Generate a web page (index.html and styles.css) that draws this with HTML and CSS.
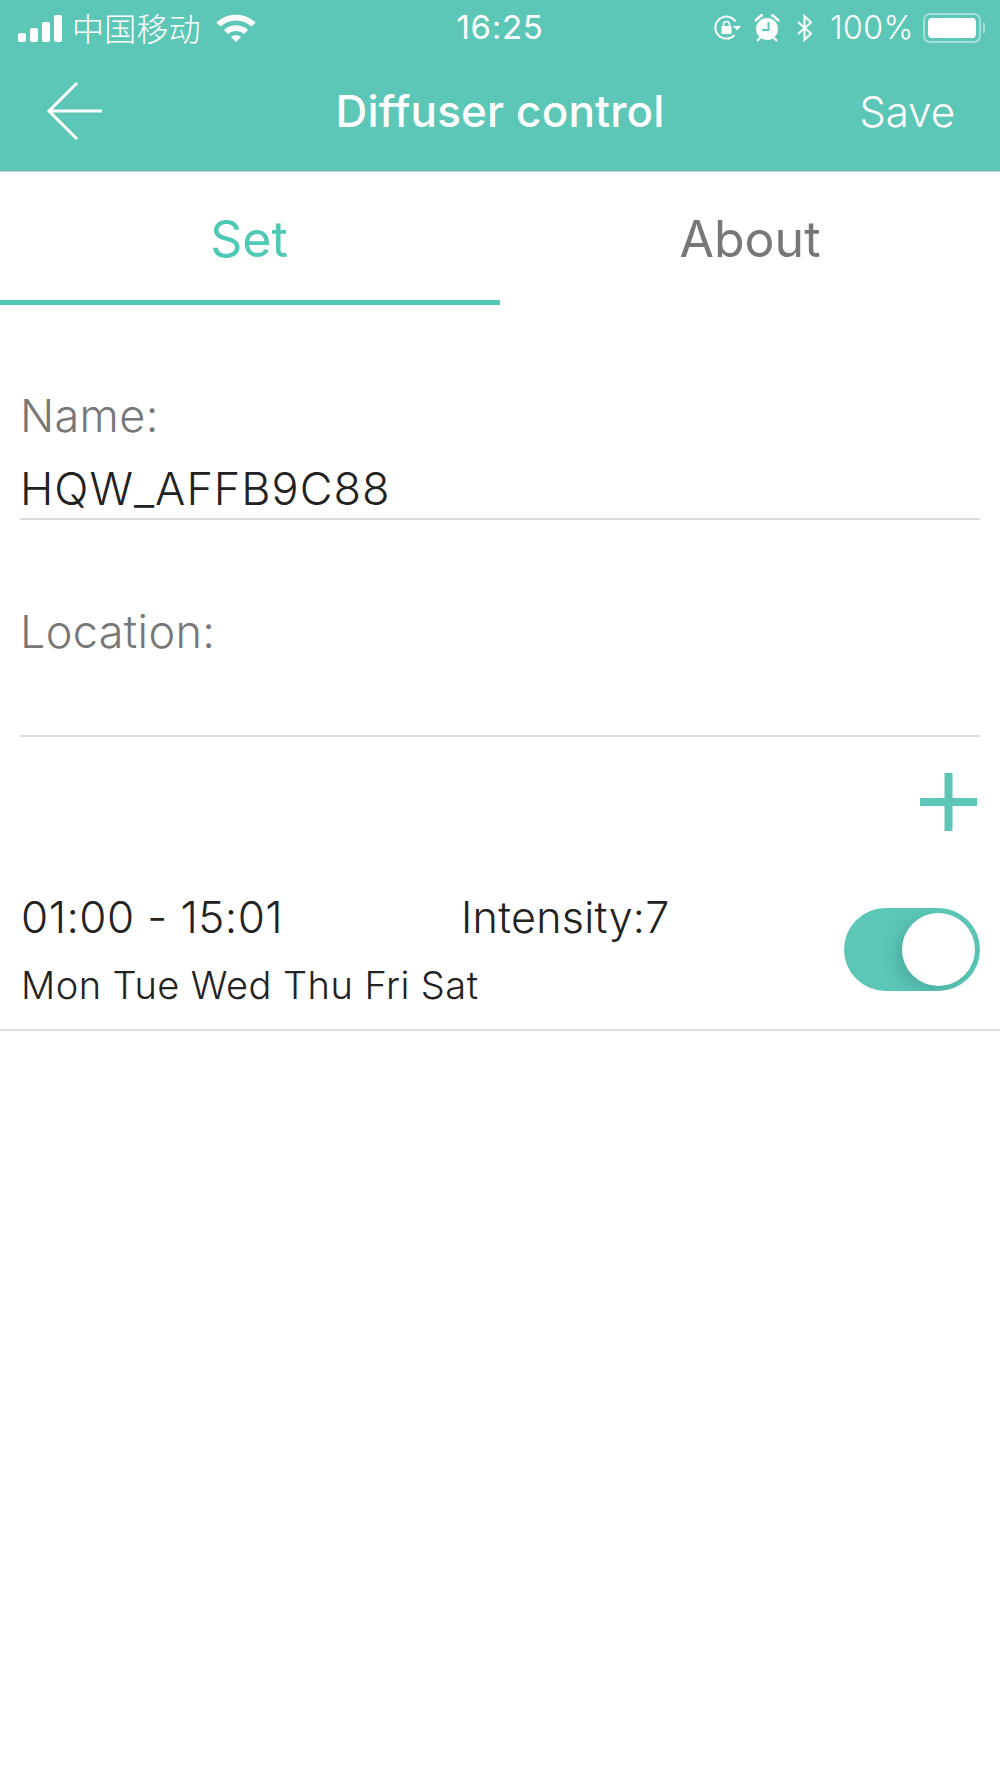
FILE: index.html
```html
<!DOCTYPE html>
<html lang="en">
<head>
<meta charset="utf-8">
<title>Diffuser control</title>
<link rel="stylesheet" href="styles.css">
</head>
<body>
<div class="app">
  <header class="top">
    <div class="status">
      <div class="status-left">
        <svg class="signal" width="46" height="30" viewBox="0 0 46 30"><g fill="#fff"><rect x="1" y="20" width="8" height="9" rx="2"/><rect x="13" y="15" width="8" height="14" rx="2"/><rect x="25" y="9" width="8" height="20" rx="2"/><rect x="37" y="2" width="8" height="27" rx="2"/></g></svg>
        <span class="carrier">中国移动</span>
        <svg class="wifi" width="40" height="30" viewBox="0 0 40 30"><g fill="#fff"><path d="M0.5 9.5C11 -1 29 -1 39.5 9.5L35.5 13.5C27 5.5 13 5.5 4.5 13.5Z"/><path d="M8 17C14.5 10.8 25.5 10.8 32 17L28 21C23.5 17 16.5 17 12 21Z"/><path d="M15 24C17.8 21.7 22.2 21.7 25 24L20 29Z"/></g></svg>
      </div>
      <div class="clock">16:25</div>
      <div class="status-right">
        <svg class="lock" width="28" height="28" viewBox="0 0 28 28"><path d="M21.5 21A11 11 0 1 1 22.5 7.5" fill="none" stroke="#fff" stroke-width="2"/><path d="M20 12L28 12L24 16.5Z" fill="#fff"/><rect x="8.5" y="12" width="10" height="8" rx="1" fill="#fff"/><path d="M10.5 12V10.5a3 3 0 0 1 6 0V12" fill="none" stroke="#fff" stroke-width="1.6"/></svg>
        <svg class="alarm" width="26" height="28" viewBox="0 0 26 28"><circle cx="13" cy="15" r="11" fill="#fff"/><path d="M14.5 8V16H8" fill="none" stroke="#5cc7b7" stroke-width="2"/><path d="M1 7L7 1.5H9M25 7L19 1.5H17" fill="none" stroke="#fff" stroke-width="2.6"/><path d="M3 27L6.5 23.5M23 27L19.5 23.5" stroke="#fff" stroke-width="2.2"/></svg>
        <svg class="bt" width="18" height="28" viewBox="0 0 18 28"><path d="M2 8L15 19.5L8.5 26V2L15 8.5L2 20" fill="none" stroke="#fff" stroke-width="2"/></svg>
        <span class="pct">100%</span>
        <div class="battery"><div class="battery-fill"></div></div>
        <div class="battery-cap"></div>
      </div>
    </div>
    <nav class="bar">
      <svg class="back" width="58" height="60" viewBox="0 0 58 60"><path d="M31 2L3 30L31 58M3 30H56" fill="none" stroke="#fff" stroke-width="3"/></svg>
      <h1 class="title">Diffuser control</h1>
      <span class="save">Save</span>
    </nav>
  </header>

  <div class="tabs">
    <div class="tab tab-active">Set</div>
    <div class="tab">About</div>
  </div>

  <section class="form">
    <div class="field field-name">
      <div class="label">Name:</div>
      <div class="value">HQW_AFFB9C88</div>
    </div>
    <div class="field field-location">
      <div class="label">Location:</div>
      <div class="value">&nbsp;</div>
    </div>
    <div class="add-row">
      <svg width="57" height="58" viewBox="0 0 57 58"><path d="M0 29H57M28.5 0V58" stroke="#5cc7b7" stroke-width="8"/></svg>
    </div>
  </section>

  <section class="schedule">
    <div class="schedule-text">
      <div class="schedule-top"><span class="time">01:00 - 15:01</span><span class="intensity">Intensity:7</span></div>
      <div class="days">Mon Tue Wed Thu Fri Sat</div>
    </div>
    <div class="toggle"><div class="knob"></div></div>
  </section>
</div>
</body>
</html>
```
FILE: styles.css
```css
* { box-sizing: border-box; }
html, body { margin: 0; padding: 0; background: #fff; }
body { font-family: Inter, "Noto Sans CJK SC", sans-serif; }
.app { width: 1000px; height: 1778px; overflow: hidden; background: #fff; }

.top { height: 172px; background: #5cc7b7; color: #fff; border-bottom: 1px solid #c4d0ce; }
.status { height: 56px; padding: 0 0 0 17px; display: flex; align-items: center; justify-content: space-between; position: relative; }
.status-left { display: flex; align-items: center; }
.carrier { font-family: "Noto Sans CJK SC", sans-serif; font-size: 32px; font-weight: 300; line-height: 40px; margin-left: 9px; letter-spacing: .2px; position: relative; top: -1px; }
.wifi { margin-left: 15px; }
.clock { position: absolute; left: 0; right: 0; top: 7px; text-align: center; font-size: 33px; font-weight: 400; line-height: 40px; letter-spacing: .7px; }
.status-right { display: flex; align-items: center; padding-right: 15px; }
.lock { margin-right: 13px; }
.alarm { margin-right: 16px; }
.bt { margin-right: 16px; }
.pct { font-size: 32px; font-weight: 300; line-height: 40px; margin-right: 9px; letter-spacing: .5px; }
.battery { width: 58px; height: 30px; border: 2px solid rgba(255,255,255,.45); border-radius: 7px; padding: 3px; }
.battery-fill { width: 100%; height: 100%; background: #fff; border-radius: 4px; }
.battery-cap { width: 2px; height: 10px; background: rgba(255,255,255,.45); margin-left: 2px; }

.bar { height: 115px; position: relative; display: flex; align-items: center; justify-content: center; padding-bottom: 5px; }
.back { position: absolute; left: 46px; top: 25px; }
.title { margin: 0; font-size: 44px; font-weight: 500; letter-spacing: .15px; line-height: 60px; }
.save { position: absolute; right: 45px; top: 26px; font-size: 42px; font-weight: 300; line-height: 60px; }

.tabs { display: flex; height: 133px; }
.tab { flex: 1; text-align: center; font-size: 50px; font-weight: 400; line-height: 60px; padding-top: 37px; color: #777; }
.tab-active { color: #4ec9b6; border-bottom: 5px solid #4ec9b6; text-indent: -2px; }

.form { padding: 0 20px; }
.field { border-bottom: 2px solid #dcdcdc; }
.field-name { margin-top: 86px; }
.field-location { margin-top: 87px; }
.label { font-size: 45px; font-weight: 300; letter-spacing: .35px; line-height: 50px; color: #777; }
.value { font-size: 45px; font-weight: 300; letter-spacing: 1px; line-height: 50px; color: #222; margin-top: 23px; padding-bottom: 4px; }
.field-location .value { margin-top: 24px; }
.add-row { display: flex; justify-content: flex-end; margin-top: 36px; padding-right: 3px; }

.schedule { margin-top: 61px; height: 139px; padding: 0 20px 0 21px; border-bottom: 2px solid #dcdcdc; display: flex; justify-content: space-between; }
.schedule-top { display: flex; font-weight: 300; line-height: 50px; color: #222; }
.time { width: 440px; font-size: 44px; letter-spacing: .45px; }
.intensity { font-size: 43px; letter-spacing: .3px; }
.days { font-size: 38px; font-weight: 300; line-height: 44px; color: #222; margin-top: 21px; letter-spacing: .45px; }
.toggle { width: 136px; height: 83px; margin-top: 16px; border-radius: 42px; background: #5cc7b7; padding: 5px; display: flex; justify-content: flex-end; overflow: hidden; }
.knob { width: 73px; height: 73px; border-radius: 50%; background: #fff; box-shadow: -6px 5px 14px rgba(40,120,110,.3); }
```
